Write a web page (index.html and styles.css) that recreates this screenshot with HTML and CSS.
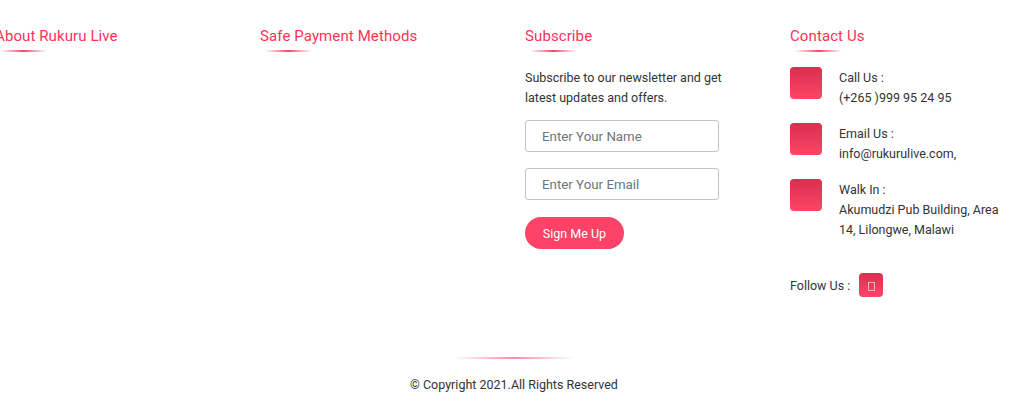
FILE: index.html
```html
<!DOCTYPE html>
<html>

<head>
  <meta charset="utf-8">
  <title>Rukuru Live</title>
  <link rel="stylesheet" href="styles.css">
</head>

<body>
  <footer class="footer">
    <div class="footer-row">
      <div class="footer-col">
        <h4 class="footer-title">About Rukuru Live</h4>
      </div>
      <div class="footer-col">
        <h4 class="footer-title">Safe Payment Methods</h4>
      </div>
      <div class="footer-col">
        <h4 class="footer-title">Subscribe</h4>
        <p class="footer-text">Subscribe to our newsletter and get latest updates and offers.</p>
        <form class="subscribe-form">
          <input class="subscribe-input" type="text" placeholder="Enter Your Name">
          <input class="subscribe-input" type="email" placeholder="Enter Your Email">
          <button class="subscribe-btn" type="button">Sign Me Up</button>
        </form>
      </div>
      <div class="footer-col">
        <h4 class="footer-title">Contact Us</h4>
        <div class="contact-item">
          <span class="contact-icon"></span>
          <div class="contact-info">Call Us :<br>(+265 )999 95 24 95</div>
        </div>
        <div class="contact-item">
          <span class="contact-icon"></span>
          <div class="contact-info">Email Us :<br>info@rukurulive.com,</div>
        </div>
        <div class="contact-item">
          <span class="contact-icon"></span>
          <div class="contact-info">Walk In :<br>Akumudzi Pub Building, Area 14, Lilongwe, Malawi</div>
        </div>
        <div class="follow">
          <span class="follow-label">Follow Us :</span>
          <a class="follow-icon" href="#"><span class="missing-glyph"></span></a>
        </div>
      </div>
    </div>
    <div class="copyright">
      <div class="copyright-line"></div>
      <p class="copyright-text">© Copyright 2021.All Rights Reserved</p>
    </div>
  </footer>
</body>

</html>
```

FILE: styles.css
```css
html,
body {
  margin: 0;
  height: 410px;
  overflow: hidden;
  background: #fff;
}

body {
  font-family: Roboto, "Noto Sans", sans-serif;
  font-size: 12.5px;
  line-height: 20px;
  color: #333;
}

.footer-row {
  display: grid;
  grid-template-columns: repeat(4, 265px);
  width: 1060px;
  height: 357px;
  margin-left: -20px;
  box-sizing: border-box;
  padding-top: 27px;
}

.footer-col {
  padding: 0 15px;
}

.footer-title {
  position: relative;
  margin: 0 0 15px;
  padding-bottom: 7px;
  height: 18px;
  font-size: 15px;
  font-weight: 400;
  letter-spacing: 0.1px;
  line-height: 18px;
  color: #ff3158;
}

.footer-title::after {
  content: "";
  position: absolute;
  left: 5px;
  bottom: 0;
  width: 47px;
  height: 2px;
  background: linear-gradient(to right, rgba(255, 61, 102, 0), #f5476c, rgba(255, 61, 102, 0));
}

.footer-text {
  max-width: 210px;
  margin: 0 0 12px;
  padding-top: 1px;
}

.subscribe-form {
  display: flex;
  flex-direction: column;
  align-items: flex-start;
}

.subscribe-input {
  width: 194px;
  height: 32px;
  box-sizing: border-box;
  margin-bottom: 16px;
  padding: 0 16px;
  border: 1px solid #c4c4c4;
  border-radius: 3px;
  font-family: inherit;
  font-size: 13.3px;
  color: #333;
}

.subscribe-input::placeholder {
  color: #6c757d;
  opacity: 1;
}

.subscribe-btn {
  width: 99px;
  height: 32px;
  margin-top: 1px;
  border: none;
  border-radius: 16px;
  background: #ff4268;
  font-family: inherit;
  font-size: 12.5px;
  color: #fff;
}

.contact-item {
  display: flex;
  gap: 17px;
  margin-bottom: 15px;
}

.contact-icon {
  flex: none;
  width: 32px;
  height: 32px;
  border-radius: 4px;
  background: linear-gradient(to bottom, #d92f4e, #ff4568);
}

.contact-info {
  width: 165px;
  padding-top: 1px;
}

.follow {
  display: flex;
  align-items: center;
  gap: 9px;
  margin-top: 33px;
}

.follow-label {
  width: 60px;
  padding-top: 2px;
  white-space: nowrap;
}

.follow-icon {
  display: flex;
  align-items: center;
  justify-content: center;
  width: 24px;
  height: 24px;
  border-radius: 4px;
  background: linear-gradient(to bottom, #d92f4e, #ff4568);
}

.missing-glyph {
  width: 5px;
  height: 7px;
  margin-top: 3px;
  border: 1px solid #ffb4c2;
}

.copyright {
  display: flex;
  flex-direction: column;
  align-items: center;
  padding-left: 4px;
}

.copyright-line {
  width: 120px;
  height: 2px;
  background: linear-gradient(to right, rgba(255, 61, 102, 0), #f98ca3, rgba(255, 61, 102, 0));
}

.copyright-text {
  margin: 16px 0 0;
}
```
